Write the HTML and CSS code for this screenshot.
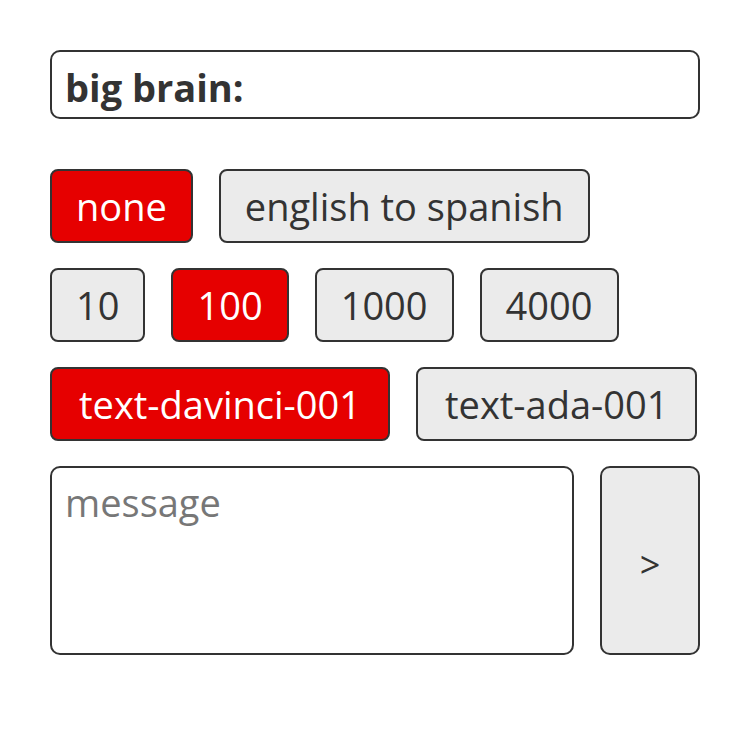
FILE: index.html
```html
<!DOCTYPE html>
<html>
<head>
<meta charset="utf-8">
<link rel="stylesheet" href="styles.css">
</head>
<body>
<main class="app">
  <div class="title-box">big brain:</div>
  <div class="row row-tight">
    <button class="chip active">none</button>
    <button class="chip">english to spanish</button>
  </div>
  <div class="row row-tight">
    <button class="chip">10</button>
    <button class="chip active">100</button>
    <button class="chip">1000</button>
    <button class="chip">4000</button>
  </div>
  <div class="row row-wide">
    <button class="chip active">text-davinci-001</button>
    <button class="chip">text-ada-001</button>
  </div>
  <div class="compose">
    <textarea class="message" placeholder="message"></textarea>
    <button class="send">&gt;</button>
  </div>
</main>
</body>
</html>
```

FILE: styles.css
```css
html, body {
  margin: 0;
  padding: 0;
  background: #ffffff;
}
body {
  font-family: "Open Sans", "Noto Sans", sans-serif;
  color: #333333;
}
.app {
  padding: 50px;
  width: 650px;
  display: flex;
  flex-direction: column;
}
.title-box {
  box-sizing: border-box;
  height: 69px;
  border: 2px solid #333333;
  border-radius: 10px;
  padding: 5px 13px 0;
  display: flex;
  align-items: center;
  font-size: 38px;
  font-weight: 700;
  margin-bottom: 50px;
}
.row {
  display: flex;
  gap: 26px;
  margin-bottom: 25px;
}
.chip {
  box-sizing: border-box;
  height: 74px;
  padding: 0 25px;
  border: 2px solid #333333;
  border-radius: 8px;
  background: #ebebeb;
  color: #333333;
  font-family: "Open Sans", "Noto Sans", sans-serif;
  font-size: 38px;
  line-height: 1;
}
.row-tight .chip {
  padding: 0 24px;
}
.row-wide .chip {
  padding: 0 27px;
}
.chip.active {
  background: #e60000;
  color: #ffffff;
}
.compose {
  display: flex;
  gap: 26px;
  height: 189px;
}
.message {
  box-sizing: border-box;
  flex: 1;
  height: 100%;
  border: 2px solid #333333;
  border-radius: 10px;
  padding: 10px 13px;
  font-family: "Open Sans", "Noto Sans", sans-serif;
  font-size: 38px;
  line-height: 1.3;
  color: #333333;
  resize: none;
  outline: none;
}
.message::placeholder {
  color: #777777;
}
.send {
  box-sizing: border-box;
  width: 100px;
  height: 100%;
  border: 2px solid #333333;
  border-radius: 10px;
  background: #ebebeb;
  color: #333333;
  font-family: "Open Sans", "Noto Sans", sans-serif;
  font-size: 36px;
  padding-top: 8px;
}
```
